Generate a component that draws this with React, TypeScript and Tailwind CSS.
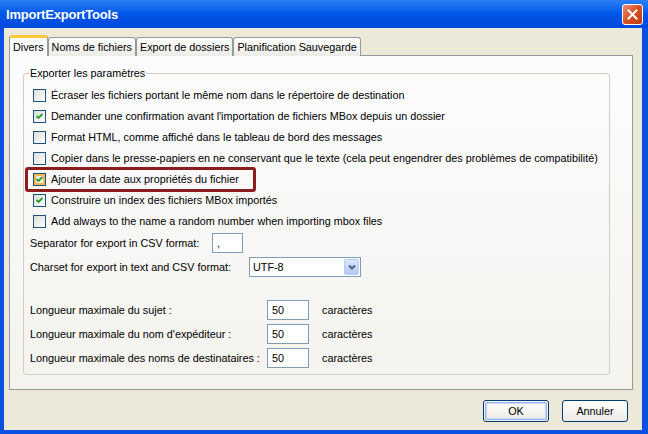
import React from 'react';

type Option = { label: string; checked: boolean; highlight?: boolean };

const options: Option[] = [
  { label: 'Écraser les fichiers portant le même nom dans le répertoire de destination', checked: false },
  { label: "Demander une confirmation avant l'importation de fichiers MBox depuis un dossier", checked: true },
  { label: 'Format HTML, comme affiché dans le tableau de bord des messages', checked: false },
  { label: 'Copier dans le presse-papiers en ne conservant que le texte (cela peut engendrer des problèmes de compatibilité)', checked: false },
  { label: 'Ajouter la date aux propriétés du fichier', checked: true, highlight: true },
  { label: 'Construire un index des fichiers MBox importés', checked: true },
  { label: 'Add always to the name a random number when importing mbox files', checked: false },
];

const lengths = [
  'Longueur maximale du sujet :',
  "Longueur maximale du nom d'expéditeur :",
  'Longueur maximale des noms de destinataires :',
];

const tabs = ['Divers', 'Noms de fichiers', 'Export de dossiers', 'Planification Sauvegarde'];

const CheckBox: React.FC<{ checked: boolean; hover?: boolean }> = ({ checked, hover }) => (
  <span className="w-[13px] h-[13px] shrink-0 border border-[#1c5180] bg-linear-to-br from-[#dcdcd7] to-white flex items-center justify-center">
    <span
      className={
        'w-[11px] h-[11px] flex items-center justify-center ' +
        (hover ? 'border-2 border-[#f8b74a]' : '')
      }
    >
      {checked && (
        <svg width="7" height="7" viewBox="0 0 7 7">
          <path d="M0.5 3 L2.5 5 L6.5 1" fill="none" stroke="#21a121" strokeWidth="1.8" />
        </svg>
      )}
    </span>
  </span>
);

const TextBox: React.FC<{ value: string; className: string }> = ({ value, className }) => (
  <div className={'h-[20px] border border-[#7f9db9] bg-white flex items-center pl-[4px] ' + className}>
    {value}
  </div>
);

const XpButton: React.FC<{ label: string; isDefault?: boolean }> = ({ label, isDefault }) => (
  <div className="w-[66px] h-[22px] rounded-[3px] border border-[#003c74] bg-linear-to-b from-white to-[#ecebe6] p-px">
    <div
      className={
        'w-full h-full rounded-[2px] flex items-center justify-center ' +
        (isDefault ? 'border border-[#98b4ee] shadow-[inset_0_0_0_1px_#c7d6f6]' : '')
      }
    >
      {label}
    </div>
  </div>
);

const App: React.FC = () => {
  return (
    <div className="w-[648px] h-[434px] flex flex-col font-['Liberation_Sans',Arial,sans-serif] text-[10.8px] leading-[13px] text-black">
      {/* title bar */}
      <div className="h-[28px] shrink-0 flex items-center justify-between pl-[6px] pr-[5px] bg-linear-to-b from-[#2a80f6] via-[#0056e7] to-[#0049dc]">
        <span className="text-white font-bold text-[13px] tracking-[-0.2px]">ImportExportTools</span>
        <div className="w-[21px] h-[21px] rounded-[3px] border border-white bg-linear-to-br from-[#ea8a6a] via-[#d9501f] to-[#c13a12] flex items-center justify-center">
          <svg width="11" height="11" viewBox="0 0 11 11">
            <path d="M1.5 1.5 L9.5 9.5 M9.5 1.5 L1.5 9.5" stroke="white" strokeWidth="2" strokeLinecap="square" />
          </svg>
        </div>
      </div>

      {/* body */}
      <div className="flex-1 flex flex-col bg-[#ece9d8] border-l-[4px] border-r-[6px] border-b-[4px] border-[#0b50e2] pl-[5px] pr-[9px] pt-[7px]">
        {/* tabs */}
        <div className="flex items-end h-[21px] -mb-px relative z-10">
          {tabs.map((t, i) =>
            i === 0 ? (
              <div
                key={t}
                className="h-[21px] px-[3px] flex items-center bg-[#fcfcfe] border-x border-[#919b9c] border-t-[3px] border-t-[#ffc83c] rounded-t-[3px]"
              >
                {t}
              </div>
            ) : (
              <div
                key={t}
                className="h-[19px] px-[3px] flex items-center bg-linear-to-b from-white to-[#ecebe6] border border-b-0 border-[#919b9c] rounded-t-[3px]"
              >
                {t}
              </div>
            )
          )}
        </div>

        {/* panel */}
        <div className="border border-[#919b9c] bg-linear-to-b from-[#fcfcfe] to-[#f4f3ee] pl-[13px] pr-[22px] pt-[11px] pb-[14px]">
          <fieldset className="border border-[#d0d0bf] rounded-[3px] pb-[6px]">
            <legend className="ml-[5px] px-px">Exporter les paramètres</legend>
            <div className="flex flex-col pl-[6px] pt-[5px]">
              {options.map((o) =>
                o.highlight ? (
                  <div
                    key={o.label}
                    className="h-[25px] -my-[2px] -ml-[5px] w-fit flex items-center gap-[5px] border-[3px] border-[#8d1c1f] rounded-[3px] pl-[5px] pr-[14px]"
                  >
                    <CheckBox checked={o.checked} hover />
                    <span>{o.label}</span>
                  </div>
                ) : (
                  <div key={o.label} className="h-[21px] flex items-center gap-[5px] pl-[3px]">
                    <CheckBox checked={o.checked} />
                    <span className="whitespace-nowrap">{o.label}</span>
                  </div>
                )
              )}

              <div className="mt-px h-[20px] flex items-center">
                <span className="w-[182px]">Separator for export in CSV format:</span>
                <TextBox value="," className="w-[31px]" />
              </div>

              <div className="mt-[4px] h-[20px] flex items-center">
                <span className="w-[219px]">Charset for export in text and CSV format:</span>
                <div className="w-[112px] h-[20px] border border-[#7f9db9] bg-white flex items-center justify-between pl-[3px] p-px">
                  <span>UTF-8</span>
                  <div className="w-[15px] h-[16px] rounded-[2px] border border-[#b9cbf3] bg-linear-to-b from-[#dbe5fd] to-[#b5c8f6] flex items-center justify-center">
                    <svg width="8" height="6" viewBox="0 0 8 6">
                      <path d="M1 1.5 L4 4.5 L7 1.5" fill="none" stroke="#4d6185" strokeWidth="2" />
                    </svg>
                  </div>
                </div>
              </div>

              <div className="mt-[23px] flex flex-col gap-[4px]">
                {lengths.map((l) => (
                  <div key={l} className="h-[20px] flex items-center">
                    <span className="w-[237px]">{l}</span>
                    <TextBox value="50" className="w-[42px]" />
                    <span className="ml-[13px]">caractères</span>
                  </div>
                ))}
              </div>
            </div>
          </fieldset>
        </div>

        {/* buttons */}
        <div className="flex justify-end gap-[13px] mt-[10px] pr-[5px]">
          <XpButton label="OK" isDefault />
          <XpButton label="Annuler" />
        </div>
      </div>
    </div>
  );
};

export default App;
